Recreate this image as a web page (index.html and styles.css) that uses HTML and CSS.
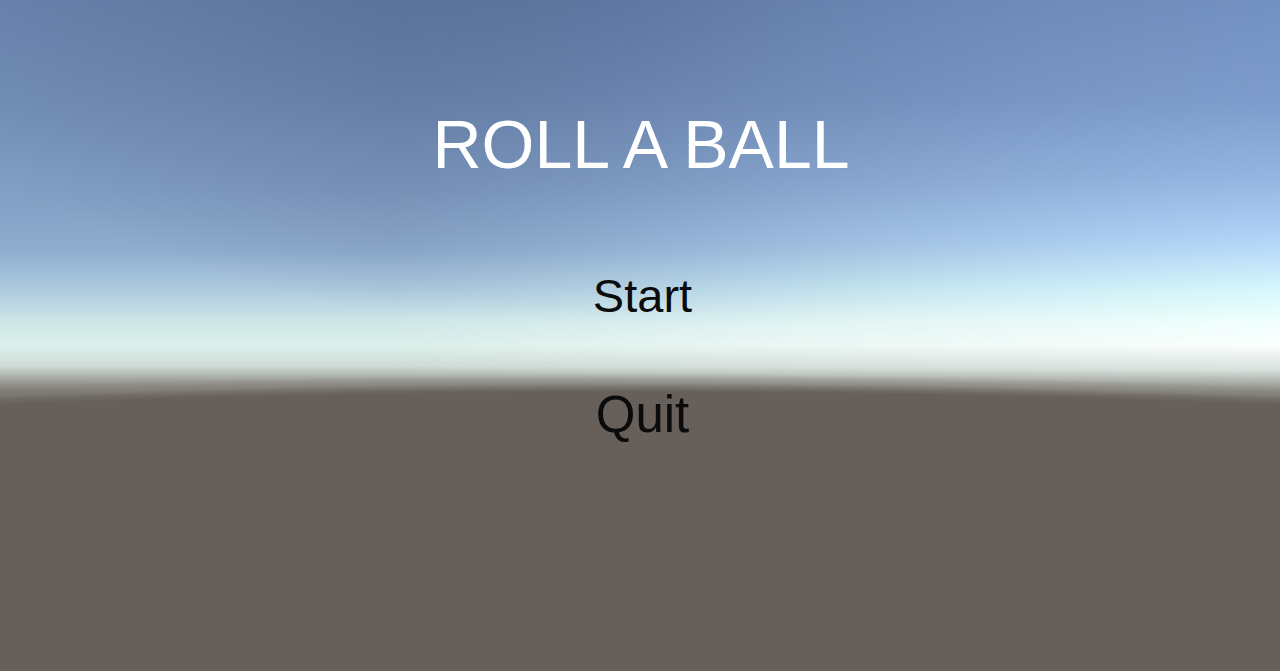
FILE: index.html
```html
<!DOCTYPE html>
<html lang="en">
<head>
  <meta charset="UTF-8">
  <meta name="viewport" content="width=device-width, initial-scale=1.0">
  <title>Roll a Ball</title>
  <link rel="stylesheet" href="styles.css">
</head>
<body>
  <div class="scene">
    <div class="menu">
      <h1 class="title">ROLL A BALL</h1>
      <button class="menu-btn start-btn" id="startBtn">Start</button>
      <button class="menu-btn quit-btn" id="quitBtn">Quit</button>
    </div>
  </div>
</body>
</html>
```

FILE: styles.css
```css
html, body {
  margin: 0;
  height: 100%;
}
body {
  font-family: 'Liberation Sans', Arial, sans-serif;
  overflow: hidden;
}
/* skybox, left side: greyer blue fading to pale haze */
.scene {
  position: relative;
  height: 100vh;
  background:
    radial-gradient(ellipse 760px 360px at 620px -30px, rgba(72, 90, 128, 0.62), rgba(72, 90, 128, 0) 100%),
    linear-gradient(180deg, #6a86b0 0px, #7490b8 100px, #819ec3 190px, #8fadcf 250px, #adcadf 290px, #cfe7e8 322px, #dbefea 346px, #d0dcd6 366px, #9a9a94 382px, #675f5a 400px, #665e59 100%);
}
/* sunward side: brighter, bluer sky */
.scene::before {
  content: "";
  position: absolute;
  inset: 0;
  background: linear-gradient(180deg, #7290c0 0px, #7d9ccc 100px, #95b6e2 180px, #b2d4f8 240px, #d6f8fc 290px, #effffd 320px, #fbfffe 345px, #d8e0dc 370px, #a0a09a 386px, #675f5a 404px, #665e59 100%);
  -webkit-mask-image: linear-gradient(90deg, transparent 30%, rgba(0, 0, 0, 0.5) 62%, #000 100%);
  mask-image: linear-gradient(90deg, transparent 30%, rgba(0, 0, 0, 0.5) 62%, #000 100%);
}
/* ground plane with a curved, soft horizon */
.scene::after {
  content: "";
  position: absolute;
  inset: 0;
  background: radial-gradient(ellipse 2000px 228px at 640px 602px, #675f5a 0%, #675f5a 92%, rgba(130, 128, 122, 0.5) 96%, rgba(170, 175, 170, 0) 100%);
}
.menu {
  position: relative;
  z-index: 1;
  display: flex;
  flex-direction: column;
  align-items: center;
  padding-top: 110px;
}
.title {
  margin: 0;
  font-size: 68px;
  font-weight: normal;
  line-height: 1;
  color: #fff;
  padding-left: 2px;
}
.menu-btn {
  background: none;
  border: none;
  padding: 0 0 0 5px;
  font-family: inherit;
  line-height: 1;
  color: #0b0b0b;
  cursor: pointer;
}
.start-btn {
  margin-top: 94px;
  font-size: 47px;
}
.quit-btn {
  margin-top: 70px;
  font-size: 51px;
}
```
